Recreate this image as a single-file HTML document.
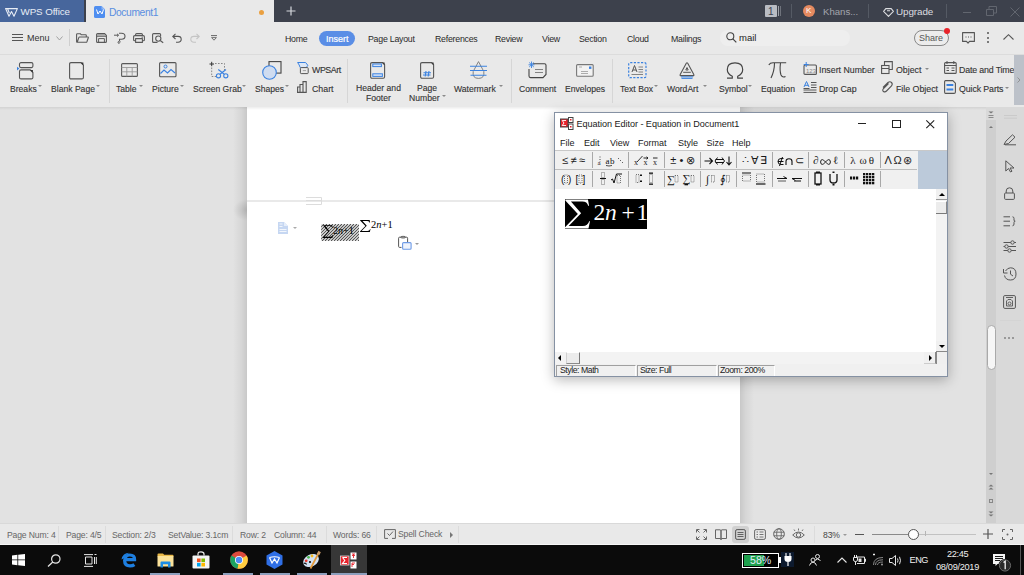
<!DOCTYPE html>
<html><head><meta charset="utf-8">
<style>
*{margin:0;padding:0;box-sizing:border-box}
html,body{width:1024px;height:575px;overflow:hidden;background:#e1e1e1;font-family:"Liberation Sans",sans-serif}
.a{position:absolute}
.t{position:absolute;white-space:nowrap;line-height:1}
svg{position:absolute;overflow:visible}
.ribl{font-size:8.6px;color:#333;-webkit-text-stroke:0.12px #333}
.ribs{font-size:8.8px;color:#333;-webkit-text-stroke:0.12px #333}
.arr{position:absolute;width:0;height:0;border-left:2.3px solid transparent;border-right:2.3px solid transparent;border-top:2.6px solid #8a8a8a;margin-top:0px}
.em{font-size:9px;color:#1a1a1a;margin-top:1px}
.es{font-size:10px;color:#1a1a1a;font-family:"Liberation Serif",serif}
.est{font-size:8.7px;color:#222;letter-spacing:-0.45px;margin-top:0.3px}
.st{font-size:8.6px;color:#666;letter-spacing:-0.15px}
.sts{top:526px;width:1px;height:17px;background:#dcdcdc}
.tab{top:34.5px;font-size:8.8px;color:#2a2a2a;letter-spacing:-0.25px}
</style></head><body>

<!-- TITLE BAR -->
<div class="a" style="left:0;top:0;width:1024px;height:22px;background:#3d414c"></div>
<div class="a" style="left:0;top:0;width:84px;height:22px;background:#47669c"></div>
<div class="a" style="left:86px;top:0;width:188px;height:22px;background:#e9e9e9"></div>
<!-- WPS logo -->
<svg style="left:5px;top:8px" width="13" height="9" viewBox="0 0 13 9"><path d="M0.6 0.6H12.4L9 8.2L6.5 3.5L4 8.2Z M2.6 0.8L4.3 5" fill="none" stroke="#e8edf5" stroke-width="1.1" stroke-linejoin="round"/></svg>
<div class="t" style="left:20.5px;top:6.5px;font-size:9.8px;color:#e8edf5;letter-spacing:-0.1px">WPS Office</div>
<!-- doc icon -->
<svg style="left:94px;top:6px" width="11" height="12" viewBox="0 0 11 12"><path d="M1.5 0H7.5L11 3.5V10.5Q11 12 9.5 12H1.5Q0 12 0 10.5V1.5Q0 0 1.5 0Z" fill="#4f8ef0"/><path d="M7.5 0V3.5H11Z" fill="#8db6f5"/></svg>
<svg style="left:96px;top:9px" width="8" height="6" viewBox="0 0 8 6"><path d="M0.5 0.5 L2 5 L4 2 L6 5 L7.5 0.5" fill="none" stroke="#fff" stroke-width="1"/></svg>
<div class="t" style="left:109px;top:7.6px;font-size:10.3px;color:#5a8ee0;letter-spacing:-0.4px">Document1</div>
<div class="a" style="left:259px;top:10px;width:5px;height:5px;border-radius:50%;background:#eaa040"></div>
<svg style="left:286px;top:6px" width="10" height="10" viewBox="0 0 10 10"><path d="M5 0.5V9.5M0.5 5H9.5" stroke="#d5d7dc" stroke-width="1.2"/></svg>

<!-- right of title bar -->
<div class="a" style="left:765px;top:5px;width:12px;height:12px;background:#b9bcc3;border-radius:1px"></div>
<div class="t" style="left:768px;top:6.5px;font-size:10px;color:#3d414c">1</div>
<div class="a" style="left:778px;top:6px;width:1px;height:10px;background:#9ea1a8"></div>
<div class="a" style="left:780px;top:6px;width:1px;height:10px;background:#6f737c"></div>
<div class="a" style="left:791px;top:4px;width:1px;height:14px;background:#555a64"></div>
<div class="a" style="left:803px;top:5px;width:12px;height:12px;border-radius:50%;background:#e58a60"></div>
<div class="t" style="left:806px;top:7px;font-size:8px;color:#fff">K</div>
<div class="t" style="left:823px;top:6.8px;font-size:9.6px;color:#a3a5ac">Khans...</div>
<div class="a" style="left:868px;top:4px;width:1px;height:14px;background:#555a64"></div>
<svg style="left:883px;top:7.5px" width="11" height="9" viewBox="0 0 11 9"><path d="M2.8 0.6H8.2L10.4 3.3L5.5 8.4L0.6 3.3Z M4 2.7H7" fill="none" stroke="#dcdde0" stroke-width="1.1" stroke-linejoin="round"/></svg>
<div class="t" style="left:896px;top:7px;font-size:9.9px;color:#dcdde0;letter-spacing:-0.1px">Upgrade</div>
<div class="a" style="left:946px;top:4px;width:1px;height:14px;background:#555a64"></div>
<div class="a" style="left:963px;top:12px;width:8px;height:1px;background:#62666f"></div>
<svg style="left:986px;top:6px" width="11" height="10" viewBox="0 0 11 10"><path d="M0.5 3.5H7.5V9.5H0.5Z M3 3.5V0.5H10.5V7H7.5" fill="none" stroke="#62666f" stroke-width="1"/></svg>
<svg style="left:1010px;top:7px" width="10" height="10" viewBox="0 0 10 10"><path d="M0.5 0.5L9.5 9.5M9.5 0.5L0.5 9.5" stroke="#62666f" stroke-width="1"/></svg>

<!-- TOOLBAR ROW -->
<div class="a" style="left:0;top:22px;width:1024px;height:85px;background:#e9e9e9"></div>
<div class="a" style="left:0;top:54px;width:1024px;height:1px;background:#dcdcdc"></div>



<!-- toolbar items -->
<svg style="left:12px;top:34px" width="11" height="8" viewBox="0 0 11 8"><path d="M0 0.5H11M0 3.5H11M0 6.5H11" stroke="#555" stroke-width="1"/></svg>
<div class="t" style="left:27px;top:34px;font-size:9px;color:#333">Menu</div>
<svg style="left:56px;top:36px" width="7" height="5" viewBox="0 0 7 5"><path d="M0.5 0.5L3.5 4L6.5 0.5" fill="none" stroke="#999" stroke-width="0.9"/></svg>
<div class="a" style="left:69px;top:29px;width:1px;height:17px;background:#cfcfcf"></div>
<!-- folder -->
<svg style="left:76px;top:33px" width="13" height="10" viewBox="0 0 13 10"><path d="M1.2 9.3Q0.6 9.3 0.6 8.6V1.4Q0.6 0.7 1.3 0.7H4.3L5.3 1.8H9.6Q10.3 1.8 10.3 2.5V4 M1.2 9.3L2.8 4.6Q3 4 3.6 4H11.8Q12.5 4 12.3 4.7L10.9 8.8Q10.7 9.3 10.1 9.3Z" fill="none" stroke="#5a5a5a" stroke-width="1.1" stroke-linejoin="round"/></svg>
<!-- save -->
<svg style="left:96px;top:33px" width="11" height="10" viewBox="0 0 11 10"><path d="M1.6 0.6H8.6L10.4 2.4V8.4Q10.4 9.4 9.4 9.4H1.6Q0.6 9.4 0.6 8.4V1.6Q0.6 0.6 1.6 0.6Z" fill="none" stroke="#5a5a5a" stroke-width="1.1"/><path d="M1 3.2H10" stroke="#5a5a5a" stroke-width="1.1"/><path d="M2.6 9.4V5.6H8.4V9.4" fill="none" stroke="#5a5a5a" stroke-width="1"/><path d="M1.2 1.8H9" stroke="#9a9a9a" stroke-width="1.2"/></svg>
<!-- format painter -->
<svg style="left:114px;top:32px" width="12" height="12" viewBox="0 0 12 12"><path d="M0 3.2H4.5M3 1.8L4.5 3.2L3 4.6" fill="none" stroke="#5a5a5a" stroke-width="1"/><path d="M5 1.2H7.5Q11 1.2 11 4.2Q11 7.2 7.5 7.2H5.5V9" fill="none" stroke="#5a5a5a" stroke-width="1.1"/><path d="M5.5 9Q3.5 9.5 4 11Q5 12 6 10.5Q6.5 9.5 5.5 9" fill="none" stroke="#5a5a5a" stroke-width="0.9"/></svg>
<!-- print -->
<svg style="left:133px;top:33px" width="12" height="10" viewBox="0 0 12 10"><path d="M2.6 2.6V1.6Q2.6 0.6 3.6 0.6H8.4Q9.4 0.6 9.4 1.6V2.6 M2.6 7.8H1.6Q0.6 7.8 0.6 6.8V3.8Q0.6 2.6 1.8 2.6H10.2Q11.4 2.6 11.4 3.8V6.8Q11.4 7.8 10.4 7.8H9.4 M2.6 5.6H9.4V9.4H2.6Z" fill="none" stroke="#5a5a5a" stroke-width="1.1" stroke-linejoin="round"/><path d="M8.5 4.2H10" stroke="#5a5a5a" stroke-width="0.9"/></svg>
<!-- preview -->
<svg style="left:152px;top:33px" width="12" height="10" viewBox="0 0 12 10"><path d="M5.5 9.4H1.6Q0.6 9.4 0.6 8.4V1.6Q0.6 0.6 1.6 0.6H7.6Q8.6 0.6 8.6 1.6V3.2" fill="none" stroke="#5a5a5a" stroke-width="1.1"/><circle cx="6.3" cy="5.6" r="2.6" fill="none" stroke="#5a5a5a" stroke-width="1.1"/><path d="M8.2 7.5L11.2 9.8" stroke="#5a5a5a" stroke-width="1.2"/></svg>
<!-- undo -->
<svg style="left:172px;top:33px" width="10" height="10" viewBox="0 0 10 10"><path d="M3.5 0.8L0.8 3.4L3.5 6 M0.9 3.4H6Q9.2 3.4 9.2 6.3Q9.2 9.2 6 9.2H4" fill="none" stroke="#555" stroke-width="1.1"/></svg>
<!-- redo -->
<svg style="left:190px;top:33px" width="10" height="10" viewBox="0 0 10 10"><path d="M6.5 0.8L9.2 3.4L6.5 6 M9.1 3.4H4Q0.8 3.4 0.8 6.3Q0.8 9.2 4 9.2H6" fill="none" stroke="#c4c4c4" stroke-width="1.1"/></svg>
<!-- dropdown -->
<svg style="left:211px;top:35px" width="6" height="6" viewBox="0 0 6 6"><path d="M0 0.6H6" stroke="#666" stroke-width="1"/><path d="M0.6 2.6H5.4L3 5.2Z" fill="none" stroke="#666" stroke-width="0.9" stroke-linejoin="round"/></svg>

<!-- tabs -->
<div class="t tab" style="left:285px">Home</div>
<div class="a" style="left:319px;top:30.5px;width:36px;height:15px;border-radius:8px;background:#5a8ee6"></div>
<div class="t" style="left:326px;top:34.5px;font-size:9px;color:#fff;-webkit-text-stroke:0.2px #fff">Insert</div>
<div class="t tab" style="left:368px">Page Layout</div>
<div class="t tab" style="left:435px">References</div>
<div class="t tab" style="left:495px">Review</div>
<div class="t tab" style="left:542px">View</div>
<div class="t tab" style="left:579px">Section</div>
<div class="t tab" style="left:627px">Cloud</div>
<div class="t tab" style="left:671px">Mailings</div>
<!-- search -->
<div class="a" style="left:720px;top:30px;width:130px;height:16px;border-radius:8px;background:#eeeeee"></div>
<svg style="left:726px;top:32px" width="11" height="11" viewBox="0 0 11 11"><circle cx="4.3" cy="4.3" r="3.5" fill="none" stroke="#444" stroke-width="1.1"/><path d="M6.8 6.8L10.3 10.3" stroke="#444" stroke-width="1.2"/></svg>
<div class="t" style="left:739px;top:33px;font-size:9.5px;color:#222">mail</div>
<!-- share -->
<div class="a" style="left:914px;top:30px;width:35px;height:16px;border-radius:8px;border:1px solid #888;background:#ececec"></div>
<div class="t" style="left:919px;top:34px;font-size:9px;color:#555">Share</div>
<div class="a" style="left:944px;top:28px;width:6px;height:6px;border-radius:50%;background:#e8232b"></div>
<svg style="left:962px;top:32px" width="13" height="13" viewBox="0 0 13 13"><path d="M0.6 0.6H12.4V9.4H7.5L6 11.2L4.5 9.4H0.6Z" fill="none" stroke="#555" stroke-width="1.1" stroke-linejoin="round"/><path d="M3.5 5H4.5M6 5H7M8.5 5H9.5" stroke="#555" stroke-width="1"/></svg>
<div class="a" style="left:987px;top:32px;width:2px;height:2px;background:#555;border-radius:1px"></div>
<div class="a" style="left:987px;top:36.5px;width:2px;height:2px;background:#555;border-radius:1px"></div>
<div class="a" style="left:987px;top:41px;width:2px;height:2px;background:#555;border-radius:1px"></div>
<svg style="left:1003px;top:34px" width="11" height="6" viewBox="0 0 11 6"><path d="M0.5 5.5L5.5 0.7L10.5 5.5" fill="none" stroke="#555" stroke-width="1.1"/></svg>


<!-- RIBBON -->
<div class="a" style="left:109px;top:59px;width:1px;height:44px;background:#d6d6d6"></div>
<div class="a" style="left:347px;top:59px;width:1px;height:44px;background:#d6d6d6"></div>
<div class="a" style="left:511px;top:59px;width:1px;height:44px;background:#d6d6d6"></div>
<div class="a" style="left:612px;top:59px;width:1px;height:44px;background:#d6d6d6"></div>


<!-- Breaks -->
<svg style="left:17px;top:62px" width="17" height="18" viewBox="0 0 17 18"><rect x="2.5" y="0.6" width="13.4" height="5" rx="1.5" fill="none" stroke="#555" stroke-width="1.1"/><path d="M4 7.9H13.2L15.9 10.6V15.4Q15.9 16.9 14.4 16.9H4Q2.5 16.9 2.5 15.4V9.4Q2.5 7.9 4 7.9Z" fill="none" stroke="#555" stroke-width="1.1"/><path d="M13 7.9L15.9 7.9L15.9 10.8Z" fill="#333"/><path d="M0 4.8L2.3 6.6L0 8.4Z" fill="#3b82e0"/></svg>
<div class="t ribl" style="left:10px;top:85px">Breaks</div><div class="arr" style="left:38px;top:85px"></div>
<!-- Blank page -->
<svg style="left:69px;top:62px" width="15" height="18" viewBox="0 0 15 18"><path d="M2 0.6H11.8L14.4 3.2V15.4Q14.4 16.9 12.9 16.9H2Q0.6 16.9 0.6 15.4V2Q0.6 0.6 2 0.6Z" fill="none" stroke="#555" stroke-width="1.1"/><path d="M11.6 0.6H14.4V3.4Z" fill="#333"/></svg>
<div class="t ribl" style="left:51px;top:85px">Blank Page</div><div class="arr" style="left:96px;top:85px"></div>
<!-- Table -->
<svg style="left:121px;top:63px" width="17" height="14" viewBox="0 0 17 14"><rect x="0.6" y="0.6" width="15.8" height="12.8" rx="1" fill="none" stroke="#5a5a5a" stroke-width="1.1"/><path d="M0.6 4.5H16.4M0.6 8.8H16.4M5.8 4.5V13.4M11.2 4.5V13.4" stroke="#9a9a9a" stroke-width="0.9"/></svg>
<div class="t ribl" style="left:116px;top:85px">Table</div><div class="arr" style="left:139px;top:85px"></div>
<!-- Picture -->
<svg style="left:159px;top:62px" width="18" height="16" viewBox="0 0 18 16"><rect x="0.6" y="0.6" width="16.4" height="14.2" rx="1" fill="none" stroke="#555" stroke-width="1.1"/><circle cx="6.5" cy="4.5" r="1.5" fill="none" stroke="#3b82e0" stroke-width="1"/><path d="M1.5 11.5L5 8L8.5 11L12 7.5L16 11" fill="none" stroke="#3b82e0" stroke-width="1.1"/></svg>
<div class="t ribl" style="left:152px;top:85px">Picture</div><div class="arr" style="left:180px;top:85px"></div>
<!-- Screen Grab -->
<svg style="left:209px;top:61px" width="20" height="18" viewBox="0 0 20 18"><path d="M0.5 3H5M2.7 0.8V5.2" stroke="#333" stroke-width="1"/><path d="M6 2.5H15.5V9 M2.7 6.5V15.5H7" fill="none" stroke="#888" stroke-width="1" stroke-dasharray="1.6 1.4"/><circle cx="9.5" cy="14.8" r="2.1" fill="none" stroke="#3b82e0" stroke-width="1.1"/><circle cx="16.8" cy="14.8" r="2.1" fill="none" stroke="#3b82e0" stroke-width="1.1"/><path d="M11 13.3L17 8.5M15.3 13.3L9.3 8.5" stroke="#3b82e0" stroke-width="1.1"/></svg>
<div class="t ribl" style="left:193px;top:85px">Screen Grab</div><div class="arr" style="left:242px;top:85px"></div>
<!-- Shapes -->
<svg style="left:262px;top:61px" width="20" height="19" viewBox="0 0 20 19"><rect x="7" y="0.6" width="12" height="11.5" fill="none" stroke="#444" stroke-width="1.1"/><circle cx="7.5" cy="11.5" r="6.8" fill="#cfdcf0" stroke="#3b82e0" stroke-width="1.1"/></svg>
<div class="t ribl" style="left:255px;top:85px">Shapes</div><div class="arr" style="left:285px;top:85px"></div>
<!-- WPSArt -->
<svg style="left:297px;top:62px" width="12" height="12" viewBox="0 0 12 12"><path d="M0.6 0.5H8.6L10.8 3.3L9.3 5.6H3.2L2.2 3Z" fill="#dce7f6" stroke="#3b82e0" stroke-width="1" stroke-linejoin="round"/><rect x="3.4" y="5.6" width="7.8" height="6" rx="0.8" fill="#e9e9e9" stroke="#555" stroke-width="1"/><path d="M5.8 8.6H9" stroke="#999" stroke-width="0.9"/></svg>
<div class="t ribs" style="left:312px;top:65.5px;letter-spacing:-0.4px">WPSArt</div>
<!-- Chart -->
<svg style="left:297px;top:81px" width="10" height="12" viewBox="0 0 10 12"><path d="M0.6 11.4V6H3V11.4M3 11.4V3.5H6V11.4M6 11.4V0.6H9.2V11.4H0" fill="none" stroke="#555" stroke-width="1.1"/></svg>
<div class="t ribs" style="left:312px;top:85px">Chart</div>
<!-- Header and Footer -->
<svg style="left:370px;top:62px" width="16" height="17" viewBox="0 0 16 17"><path d="M2 0.6H12.4L14.6 2.8V14.8Q14.6 16.2 13.2 16.2H2Q0.6 16.2 0.6 14.8V2Q0.6 0.6 2 0.6Z" fill="none" stroke="#555" stroke-width="1.1"/><path d="M12.2 0.6H14.6V3Z" fill="#333"/><rect x="2.8" y="2" width="8.6" height="2.6" fill="#d4e2f7" stroke="#3b82e0" stroke-width="1"/><rect x="2.8" y="11.8" width="9.6" height="2.6" fill="#d4e2f7" stroke="#3b82e0" stroke-width="1"/></svg>
<div class="t ribl" style="left:356px;top:84px">Header and</div>
<div class="t ribl" style="left:366px;top:94px">Footer</div>
<!-- Page Number -->
<svg style="left:420px;top:62px" width="15" height="17" viewBox="0 0 15 17"><path d="M2 0.6H11.4L13.6 2.8V14.8Q13.6 16.2 12.2 16.2H2Q0.6 16.2 0.6 14.8V2Q0.6 0.6 2 0.6Z" fill="none" stroke="#555" stroke-width="1.1"/><path d="M11.2 0.6H13.6V3Z" fill="#333"/><path d="M6 9L5.2 14.5M9 9L8.2 14.5M3.5 10.8H11M3 13H10.5" stroke="#3b82e0" stroke-width="1.1"/></svg>
<div class="t ribl" style="left:417px;top:84px">Page</div>
<div class="t ribl" style="left:409px;top:94px">Number</div><div class="arr" style="left:442px;top:95px"></div>
<!-- Watermark -->
<svg style="left:469px;top:61px" width="19" height="18" viewBox="0 0 19 18"><path d="M9.5 0.6L4.2 10.5Q3.2 17.4 9.5 17.4Q15.8 17.4 14.8 10.5Z" fill="none" stroke="#777" stroke-width="0.9"/><path d="M1 5.3H18M1 9.5H18M1.5 14.2H17.5" stroke="#3b82e0" stroke-width="1.1"/></svg>
<div class="t ribl" style="left:454px;top:85px">Watermark</div><div class="arr" style="left:499px;top:85px"></div>
<!-- Comment -->
<svg style="left:528px;top:61px" width="19" height="18" viewBox="0 0 19 18"><path d="M5 2.8H16.5Q18 2.8 18 4.3V13.5L15 16.6H2.5Q1 16.6 1 15.1V8" fill="none" stroke="#444" stroke-width="1.1"/><path d="M7 8.5H15M7 11.5H15" stroke="#777" stroke-width="0.9"/><path d="M3.5 0.5V7M0.5 3.8H6.5M1.2 1.5L5.8 6M5.8 1.5L1.2 6" stroke="#3b82e0" stroke-width="0.9"/></svg>
<div class="t ribl" style="left:519px;top:85px">Comment</div>
<!-- Envelopes -->
<svg style="left:576px;top:64px" width="18" height="13" viewBox="0 0 18 13"><rect x="0.6" y="0.6" width="16.6" height="11.6" rx="1" fill="#f2f2f2" stroke="#777" stroke-width="1.1"/><rect x="13" y="2.5" width="2.4" height="2.4" fill="#3b82e0"/><path d="M3 3H6M5 7.5H12M5 9.5H12" stroke="#999" stroke-width="0.8"/></svg>
<div class="t ribl" style="left:565px;top:85px">Envelopes</div>
<!-- Text Box -->
<svg style="left:628px;top:62px" width="19" height="17" viewBox="0 0 19 17"><rect x="0.7" y="0.7" width="17.3" height="15" rx="1.5" fill="none" stroke="#3b82e0" stroke-width="1.2" stroke-dasharray="2.2 1.4"/><path d="M4 10L6.5 3.5L9 10M5 8H8" fill="none" stroke="#555" stroke-width="1"/><path d="M10.5 5H15M10.5 7.5H15M10.5 10H15M3.5 12.5H15" stroke="#777" stroke-width="0.9"/></svg>
<div class="t ribl" style="left:620px;top:85px">Text Box</div><div class="arr" style="left:654px;top:85px"></div>
<!-- WordArt -->
<svg style="left:679px;top:62px" width="16" height="17" viewBox="0 0 16 17"><path d="M1.2 12.6L7.3 1.2Q8 0.2 8.7 1.2L14.8 12.6Q15.2 13.6 14.2 13.6H1.8Q0.8 13.6 1.2 12.6Z" fill="none" stroke="#555" stroke-width="1.1" stroke-linejoin="round"/><path d="M8 5.5L6.8 8H9.2Z M4.2 10.3H11.8" fill="none" stroke="#555" stroke-width="1"/><path d="M2 14.9H14M2.5 16.4H13.5" stroke="#3b82e0" stroke-width="1"/></svg>
<div class="t ribl" style="left:667px;top:85px">WordArt</div><div class="arr" style="left:703px;top:85px"></div>
<!-- Symbol -->
<svg style="left:726px;top:62px" width="18" height="17" viewBox="0 0 18 17"><path d="M1 16.2H6.3V14.3Q1.3 12 1.3 7.5Q1.3 0.8 9 0.8Q16.7 0.8 16.7 7.5Q16.7 12 11.7 14.3V16.2H17" fill="none" stroke="#444" stroke-width="1.2" stroke-linejoin="round"/></svg>
<div class="t ribl" style="left:719px;top:85px">Symbol</div><div class="arr" style="left:748px;top:85px"></div>
<!-- Equation -->
<svg style="left:768px;top:62px" width="19" height="17" viewBox="0 0 19 17"><path d="M0.8 3Q2 0.8 5 0.8H18.2M6.5 0.8Q6.5 9 3 16 M12.5 0.8Q11.5 9 13 13Q14.5 16 17.5 14.5" fill="none" stroke="#444" stroke-width="1.1"/></svg>
<div class="t ribl" style="left:761px;top:85px">Equation</div>
<!-- Insert Number -->
<svg style="left:803px;top:62px" width="14" height="13" viewBox="0 0 14 13"><rect x="1" y="3" width="12.4" height="9.4" rx="1" fill="none" stroke="#555" stroke-width="1.1"/><path d="M3.2 0V5M0.7 2.5H5.7" stroke="#3b82e0" stroke-width="1"/><text x="3" y="10.8" font-size="6" font-family="Liberation Sans" fill="#888">123</text></svg>
<div class="t ribs" style="left:819px;top:65.5px">Insert Number</div>
<!-- Drop Cap -->
<svg style="left:803px;top:81px" width="14" height="12" viewBox="0 0 14 12"><path d="M1 6L3.5 0.5L6 6M1.8 4.3H5.2" fill="none" stroke="#3b82e0" stroke-width="1"/><path d="M0.5 7.5H6.5M8 1.5H13.5M8 4H13.5M8 6.5H13.5M0.5 9H13.5M0.5 11.4H13.5" stroke="#555" stroke-width="1"/></svg>
<div class="t ribs" style="left:819px;top:85px">Drop Cap</div>
<!-- Object -->
<svg style="left:881px;top:61px" width="12" height="13" viewBox="0 0 12 13"><path d="M3.5 4V0.6H11.3V8.5H8" fill="none" stroke="#555" stroke-width="1.1"/><rect x="0.6" y="4.5" width="7.4" height="8" fill="none" stroke="#555" stroke-width="1.1"/><path d="M0.6 7.5H8" stroke="#555" stroke-width="1"/></svg>
<div class="t ribs" style="left:896px;top:65.5px">Object</div><div class="arr" style="left:925px;top:68px"></div>
<!-- File Object -->
<svg style="left:881px;top:81px" width="12" height="12" viewBox="0 0 12 12"><path d="M7.5 2.5L2.5 7.5Q1 9.5 2.5 10.5Q4 11.5 5.5 10L10.5 5Q12 3 10.5 1.5Q9 0 7 1.5L2 6.5" fill="none" stroke="#555" stroke-width="1.1"/></svg>
<div class="t ribs" style="left:896px;top:85px">File Object</div>
<!-- Date and Time -->
<svg style="left:944px;top:61px" width="13" height="13" viewBox="0 0 13 13"><rect x="0.6" y="1.6" width="11.6" height="10.8" rx="1" fill="none" stroke="#555" stroke-width="1.1"/><path d="M3 0V3M9.8 0V3M0.6 4.5H12.2M2.5 7H5M7.5 7H10.5M2.5 9.5H5M7.5 9.5H10.5" stroke="#555" stroke-width="1"/></svg>
<div class="t ribs" style="left:959px;top:65.5px;letter-spacing:-0.15px">Date and Time</div>
<!-- Quick Parts -->
<svg style="left:944px;top:80px" width="12" height="14" viewBox="0 0 12 14"><path d="M1.5 0.6H8.8L11.4 3.2V12Q11.4 13.4 10 13.4H1.5Q0.6 13.4 0.6 12V2Q0.6 0.6 1.5 0.6Z" fill="none" stroke="#555" stroke-width="1.1"/><rect x="2.5" y="4" width="6.8" height="2" fill="#3b82e0"/><rect x="2.5" y="8.5" width="6.8" height="2" fill="#3b82e0"/></svg>
<div class="t ribs" style="left:959px;top:85px;letter-spacing:-0.1px">Quick Parts</div><div class="arr" style="left:1004.5px;top:87px"></div>


<div class="a" style="left:1014px;top:55px;width:10px;height:50px;background:#bcc1c9"></div>
<svg style="left:1017px;top:77px" width="4" height="6" viewBox="0 0 4 6"><path d="M0.5 0.5L3 3L0.5 5.5" fill="none" stroke="#888" stroke-width="0.8"/></svg>
<!-- DOC AREA -->
<div class="a" style="left:0;top:107px;width:986px;height:416px;background:#e2e2e2"></div>
<!-- page shadow -->
<div class="a" style="left:233px;top:107px;width:14px;height:416px;background:linear-gradient(to right,#e2e2e2,#d6d6d6 60%,#c8c8c8)"></div>
<div class="a" style="left:740px;top:107px;width:14px;height:416px;background:linear-gradient(to right,#c8c8c8,#d6d6d6 40%,#e2e2e2)"></div>
<div class="a" style="left:230px;top:196px;width:17px;height:28px;background:radial-gradient(ellipse 14px 11px at 100% 50%,rgba(0,0,0,0.13),rgba(0,0,0,0))"></div>
<div class="a" style="left:247px;top:107px;width:493px;height:416px;background:#fff"></div>
<div class="a" style="left:0;top:107px;width:986px;height:3px;background:linear-gradient(to bottom,rgba(0,0,0,0.07),rgba(0,0,0,0))"></div>
<div class="a" style="left:247px;top:200px;width:307px;height:2px;background:#e9e9e9"></div>
<svg style="left:306px;top:197px" width="17" height="9" viewBox="0 0 17 9"><path d="M0 0.5H15.5V7.5H0 M0 3.5H15.5" fill="none" stroke="#dcdcdc" stroke-width="1"/></svg>
<!-- doc icon -->
<svg style="left:278px;top:222px" width="10" height="12" viewBox="0 0 10 12"><path d="M0 0H6L10 4V12H0Z" fill="#c6d7f2"/><path d="M6 0V4H10" fill="#e6eefa"/><path d="M1.5 2H4.5M1.5 4.5H4.5M1.5 7.5H8.5M1.5 9.5H8.5" stroke="#f2f6fc" stroke-width="1"/></svg>
<div class="a" style="left:293px;top:227px;width:0;height:0;border-left:2px solid transparent;border-right:2px solid transparent;border-top:2px solid #aaa"></div>
<!-- hatched selection -->
<svg style="left:321px;top:224px;overflow:hidden" width="38" height="17" viewBox="0 0 38 17"><rect width="38" height="17" fill="#fff"/><g stroke="#505050" stroke-width="1.1"><path d="M-17 17L0 0" /><path d="M-14 17L3 0" /><path d="M-11 17L6 0" /><path d="M-8 17L9 0" /><path d="M-5 17L12 0" /><path d="M-2 17L15 0" /><path d="M1 17L18 0" /><path d="M4 17L21 0" /><path d="M7 17L24 0" /><path d="M10 17L27 0" /><path d="M13 17L30 0" /><path d="M16 17L33 0" /><path d="M19 17L36 0" /><path d="M22 17L39 0" /><path d="M25 17L42 0" /><path d="M28 17L45 0" /><path d="M31 17L48 0" /><path d="M34 17L51 0" /><path d="M37 17L54 0" /></g></svg>
<svg style="left:323px;top:224.5px" width="10" height="13" viewBox="0 0 24.5 29" preserveAspectRatio="none"><path d="M0.3 0.3H22.5L23.6 6.5H22.7Q21.8 2.3 17 2.3H5.8L15.8 13.8L3.6 26.3H17.5Q22.3 26.3 23.7 21.6H24.5L23 28.8H0V27.6L12.6 14.6L0.3 1.3Z" fill="#000"/></svg>
<div class="t" style="left:333px;top:226px;font-size:10px;font-family:'Liberation Serif',serif;color:#000">2<i>n</i>+1</div>
<svg style="left:360px;top:220px" width="10.5" height="12" viewBox="0 0 24.5 29" preserveAspectRatio="none"><path d="M0.3 0.3H22.5L23.6 6.5H22.7Q21.8 2.3 17 2.3H5.8L15.8 13.8L3.6 26.3H17.5Q22.3 26.3 23.7 21.6H24.5L23 28.8H0V27.6L12.6 14.6L0.3 1.3Z" fill="#000"/></svg>
<div class="t" style="left:371px;top:220px;font-size:10.5px;font-family:'Liberation Serif',serif;color:#000">2<i>n</i>+1</div>
<!-- paste icon -->
<svg style="left:398px;top:236px" width="14" height="14" viewBox="0 0 14 14"><path d="M3.5 11.4H1.6Q0.6 11.4 0.6 10.4V2.2Q0.6 1.2 1.6 1.2H8.6Q9.6 1.2 9.6 2.2V6" fill="none" stroke="#555" stroke-width="1"/><ellipse cx="5.1" cy="1.2" rx="2.5" ry="0.9" fill="#aaa" stroke="#555" stroke-width="0.8"/><rect x="4.6" y="6.6" width="8.5" height="6.6" rx="1" fill="#eef3fc" stroke="#6e9be6" stroke-width="1.1"/></svg>
<div class="a" style="left:415px;top:243px;width:0;height:0;border-left:2px solid transparent;border-right:2px solid transparent;border-top:2px solid #999"></div>


<!-- EQUATION EDITOR -->
<div class="a" style="left:554px;top:112px;width:394px;height:265px;box-shadow:0 3px 12px rgba(0,0,0,0.28);background:#fff;border:1px solid #8591a3"></div>
<!-- icon -->
<svg style="left:560px;top:117px" width="14" height="13" viewBox="0 0 14 13"><rect x="0.5" y="2" width="7.5" height="8" fill="#e8232b" stroke="#444" stroke-width="1"/><path d="M2.2 3.5H6M2.2 3.5L4 6L2.2 8.5H6" fill="none" stroke="#fff" stroke-width="0.9"/><rect x="8.5" y="0.5" width="4.5" height="5" fill="#fff" stroke="#444" stroke-width="1"/><rect x="8.5" y="7" width="4.5" height="5.5" fill="#fff" stroke="#444" stroke-width="1"/><rect x="10" y="2" width="1.5" height="1.5" fill="#e8232b"/><rect x="10" y="9" width="1.5" height="1.5" fill="#e8232b"/></svg>
<div class="t" style="left:576.5px;top:119.5px;font-size:9.1px;color:#1a1a1a;letter-spacing:-0.05px">Equation Editor - Equation in Document1</div>
<div class="a" style="left:858px;top:123px;width:8px;height:1px;background:#222"></div>
<div class="a" style="left:892px;top:119.5px;width:8.5px;height:8px;border:1px solid #222"></div>
<svg style="left:926px;top:119.5px" width="9" height="9" viewBox="0 0 9 9"><path d="M0.3 0.3L8.2 8.2M8.2 0.3L0.3 8.2" stroke="#222" stroke-width="1.1"/></svg>
<!-- menu -->
<div class="t em" style="left:560px;top:138px">File</div>
<div class="t em" style="left:584px;top:138px">Edit</div>
<div class="t em" style="left:610px;top:138px">View</div>
<div class="t em" style="left:638px;top:138px">Format</div>
<div class="t em" style="left:678px;top:138px">Style</div>
<div class="t em" style="left:706.5px;top:138px">Size</div>
<div class="t em" style="left:732px;top:138px">Help</div>
<!-- toolbar -->
<div class="a" style="left:555px;top:150px;width:392px;height:39px;background:#f0f0f0;border-top:1px solid #c8c8c8"></div>
<div class="a" style="left:918px;top:151px;width:29px;height:38px;background:#bccada"></div>
<div class="a" style="left:555px;top:169px;width:362px;height:1px;background:#bdbdbd"></div>
<div class="a" style="left:592px;top:152px;width:1px;height:16px;background:#a8a8a8"></div><div class="a" style="left:592px;top:171px;width:1px;height:16px;background:#a8a8a8"></div>
<div class="a" style="left:628px;top:152px;width:1px;height:16px;background:#a8a8a8"></div><div class="a" style="left:628px;top:171px;width:1px;height:16px;background:#a8a8a8"></div>
<div class="a" style="left:664px;top:152px;width:1px;height:16px;background:#a8a8a8"></div><div class="a" style="left:664px;top:171px;width:1px;height:16px;background:#a8a8a8"></div>
<div class="a" style="left:700px;top:152px;width:1px;height:16px;background:#a8a8a8"></div><div class="a" style="left:700px;top:171px;width:1px;height:16px;background:#a8a8a8"></div>
<div class="a" style="left:736px;top:152px;width:1px;height:16px;background:#a8a8a8"></div><div class="a" style="left:736px;top:171px;width:1px;height:16px;background:#a8a8a8"></div>
<div class="a" style="left:772px;top:152px;width:1px;height:16px;background:#a8a8a8"></div><div class="a" style="left:772px;top:171px;width:1px;height:16px;background:#a8a8a8"></div>
<div class="a" style="left:808px;top:152px;width:1px;height:16px;background:#a8a8a8"></div><div class="a" style="left:808px;top:171px;width:1px;height:16px;background:#a8a8a8"></div>
<div class="a" style="left:844px;top:152px;width:1px;height:16px;background:#a8a8a8"></div><div class="a" style="left:844px;top:171px;width:1px;height:16px;background:#a8a8a8"></div>
<div class="a" style="left:880px;top:152px;width:1px;height:16px;background:#a8a8a8"></div><div class="a" style="left:880px;top:171px;width:1px;height:16px;background:#a8a8a8"></div>

<div class="t" style="left:557px;top:154.5px;width:16px;text-align:center;font-size:11px;font-family:'Liberation Sans',sans-serif;color:#1a1a1a;">&#8804;</div>
<div class="t" style="left:565.5px;top:154.5px;width:16px;text-align:center;font-size:11px;font-family:'Liberation Sans',sans-serif;color:#1a1a1a;">&#8800;</div>
<div class="t" style="left:574px;top:154.5px;width:16px;text-align:center;font-size:11px;font-family:'Liberation Sans',sans-serif;color:#1a1a1a;">&#8776;</div>
<svg style="left:597px;top:156px" width="30" height="10" viewBox="0 0 30 10"><path d="M3 0.5V1.5M3 3V4M3 5.5V6" stroke="#222" stroke-width="0.8"/><text x="0.5" y="9" font-size="7" font-family="Liberation Serif" fill="#111">a</text><text x="8.5" y="8" font-size="9" font-family="Liberation Serif" fill="#111">a</text><text x="13" y="8" font-size="9" font-family="Liberation Serif" fill="#111">b</text><path d="M9 9.5Q12 10.5 15 9.5" stroke="#222" stroke-width="0.8" fill="none"/><circle cx="21.5" cy="2.5" r="0.5" fill="#333"/><circle cx="23.5" cy="4.5" r="0.5" fill="#333"/><circle cx="25.5" cy="6.5" r="0.5" fill="#333"/></svg>
<svg style="left:634px;top:155px" width="26" height="11" viewBox="0 0 26 11"><text x="0" y="10" font-size="8" font-family="Liberation Serif" fill="#222">x</text><path d="M3 7L8.5 1" stroke="#222" stroke-width="0.9"/><text x="9.5" y="10" font-size="8" font-family="Liberation Serif" fill="#222">x</text><path d="M9.5 3H14M12.5 1.8L14 3L12.5 4.2" stroke="#111" stroke-width="0.9" fill="none"/><text x="19" y="10" font-size="8" font-family="Liberation Serif" fill="#222">x</text><path d="M19 3H23.5" stroke="#111" stroke-width="0.9"/></svg>
<div class="t" style="left:665.3px;top:154.5px;width:16px;text-align:center;font-size:11px;font-family:'Liberation Sans',sans-serif;color:#1a1a1a;">&#177;</div>
<div class="t" style="left:673.5px;top:154.5px;width:16px;text-align:center;font-size:11px;font-family:'Liberation Sans',sans-serif;color:#1a1a1a;">&#8226;</div>
<div class="t" style="left:682px;top:154.5px;width:16px;text-align:center;font-size:11px;font-family:'Liberation Sans',sans-serif;color:#1a1a1a;">&#8855;</div>



<div class="t" style="left:737.8px;top:154.5px;width:16px;text-align:center;font-size:11px;font-family:'Liberation Sans',sans-serif;color:#1a1a1a;">&#8756;</div>
<div class="t" style="left:747.2px;top:154.5px;width:16px;text-align:center;font-size:11px;font-family:'Liberation Sans',sans-serif;color:#1a1a1a;">&#8704;</div>
<div class="t" style="left:755.7px;top:154.5px;width:16px;text-align:center;font-size:11px;font-family:'Liberation Sans',sans-serif;color:#1a1a1a;">&#8707;</div>
<svg style="left:777px;top:157px" width="8" height="9" viewBox="0 0 8 9"><path d="M6.5 1.5H4Q1 1.5 1 4.5Q1 7.5 4 7.5H6.5M1 4.5H6.5M5.5 0L2.5 9" fill="none" stroke="#111" stroke-width="1"/></svg>

<div class="t" style="left:791px;top:154.5px;width:16px;text-align:center;font-size:11px;font-family:'Liberation Sans',sans-serif;color:#1a1a1a;">&#8834;</div>
<div class="t" style="left:808px;top:154.5px;width:16px;text-align:center;font-size:11px;font-family:'Liberation Serif',serif;color:#1a1a1a;">&#8706;</div>
<svg style="left:820px;top:159px" width="11" height="6" viewBox="0 0 11 6"><path d="M5.5 3Q3.5 0.6 2.3 0.6Q0.6 0.6 0.6 3Q0.6 5.4 2.3 5.4Q3.5 5.4 5.5 3Q7.5 0.6 8.7 0.6Q10.4 0.6 10.4 3Q10.4 5.4 8.7 5.4Q7.5 5.4 5.5 3Z" fill="none" stroke="#222" stroke-width="1"/></svg>
<div class="t" style="left:827.3px;top:154.5px;width:16px;text-align:center;font-size:11px;font-family:'Liberation Serif',serif;color:#1a1a1a;">&#8467;</div>
<div class="t" style="left:845px;top:154.5px;width:16px;text-align:center;font-size:11px;font-family:'Liberation Serif',serif;color:#1a1a1a;">&#955;</div>
<div class="t" style="left:855px;top:154.5px;width:16px;text-align:center;font-size:11px;font-family:'Liberation Serif',serif;color:#1a1a1a;">&#969;</div>
<div class="t" style="left:863.4px;top:154.5px;width:16px;text-align:center;font-size:11px;font-family:'Liberation Serif',serif;color:#1a1a1a;">&#952;</div>
<div class="t" style="left:880.2px;top:154.5px;width:16px;text-align:center;font-size:11px;font-family:'Liberation Sans',sans-serif;color:#1a1a1a;">&#923;</div>
<div class="t" style="left:889.7px;top:154.5px;width:16px;text-align:center;font-size:11px;font-family:'Liberation Sans',sans-serif;color:#1a1a1a;">&#937;</div>
<div class="t" style="left:899.8px;top:154.5px;width:16px;text-align:center;font-size:11px;font-family:'Liberation Sans',sans-serif;color:#1a1a1a;">&#8859;</div>
<svg style="left:556px;top:171px" width="362" height="16" viewBox="0 0 362 16"><text x="5" y="12" font-size="10" font-family="Liberation Sans" fill="#111">(</text><rect x="8.5" y="4" width="3" height="8" fill="none" stroke="#555" stroke-width="0.8" stroke-dasharray="1 1"/><text x="12" y="12" font-size="10" font-family="Liberation Sans" fill="#111">)</text><text x="19.5" y="12" font-size="10" font-family="Liberation Sans" fill="#111">[</text><rect x="23" y="4" width="3" height="8" fill="none" stroke="#555" stroke-width="0.8" stroke-dasharray="1 1"/><text x="26.5" y="12" font-size="10" font-family="Liberation Sans" fill="#111">]</text><rect x="45.5" y="1.5" width="3" height="5" fill="none" stroke="#555" stroke-width="0.8" stroke-dasharray="1 1"/><path d="M44 7.5H50" stroke="#111" stroke-width="1"/><rect x="45.5" y="8.5" width="3" height="5" fill="none" stroke="#555" stroke-width="0.8" stroke-dasharray="1 1"/><path d="M55 9L56.5 8L58 12L60.5 3H66" fill="none" stroke="#111" stroke-width="1"/><rect x="61" y="4.5" width="3.5" height="7.5" fill="none" stroke="#555" stroke-width="0.8" stroke-dasharray="1 1"/><rect x="80" y="3.5" width="3" height="8" fill="none" stroke="#555" stroke-width="0.8" stroke-dasharray="1 1"/><rect x="84" y="3.5" width="2" height="1.5" fill="#111"/><rect x="84" y="9.5" width="2" height="1.5" fill="#111"/><rect x="93" y="1.5" width="4" height="1.3" fill="#111"/><rect x="93.5" y="3.5" width="3" height="8" fill="none" stroke="#555" stroke-width="0.8" stroke-dasharray="1 1"/><rect x="93" y="12.5" width="4" height="1.3" fill="#111"/><text x="111" y="12" font-size="11" font-family="Liberation Serif" fill="#111">&#8721;</text><rect x="119" y="4.5" width="3" height="6.5" fill="none" stroke="#555" stroke-width="0.8" stroke-dasharray="1 1"/><text x="126.5" y="11" font-size="11" font-family="Liberation Serif" fill="#111">&#8721;</text><rect x="135" y="4.5" width="3" height="6.5" fill="none" stroke="#555" stroke-width="0.8" stroke-dasharray="1 1"/><rect x="128.5" y="13" width="3.5" height="1.3" fill="#111"/><text x="150" y="12" font-size="11" font-family="Liberation Serif" fill="#111">&#8747;</text><rect x="155.5" y="4.5" width="3" height="6.5" fill="none" stroke="#555" stroke-width="0.8" stroke-dasharray="1 1"/><text x="164" y="12" font-size="11" font-family="Liberation Serif" fill="#111">&#8750;</text><rect x="170.5" y="4.5" width="3" height="6.5" fill="none" stroke="#555" stroke-width="0.8" stroke-dasharray="1 1"/><path d="M186 2H195" stroke="#111" stroke-width="1"/><rect x="186.5" y="4" width="8" height="6" fill="none" stroke="#555" stroke-width="0.8" stroke-dasharray="1 1"/><rect x="200.5" y="3" width="8" height="8" fill="none" stroke="#555" stroke-width="0.8" stroke-dasharray="1 1"/><path d="M200 13H209.5" stroke="#111" stroke-width="1.2"/><path d="M221 7.5H231M227.5 5.5L231 7.5" fill="none" stroke="#111" stroke-width="1"/><path d="M222 10H230" stroke="#333" stroke-width="0.8"/><path d="M236 7.5H246M239.5 9.5L236 7.5" fill="none" stroke="#111" stroke-width="1"/><path d="M238 10H245" stroke="#333" stroke-width="1.2"/><rect x="259" y="2" width="6" height="11" fill="none" stroke="#111" stroke-width="1.3"/><rect x="260" y="0.5" width="4" height="1.5" fill="#111"/><rect x="260" y="13" width="4" height="1.5" fill="#111"/><path d="M274 3V9Q274 12 277.5 12Q281 12 281 9V3" fill="none" stroke="#111" stroke-width="1.3"/><rect x="276.5" y="0.5" width="2" height="1.5" fill="#111"/><rect x="276.5" y="13" width="2" height="1.5" fill="#111"/><rect x="294" y="5.5" width="2.2" height="3" fill="#111"/><rect x="297" y="5.5" width="2.2" height="3" fill="#111"/><rect x="300" y="5.5" width="2.2" height="3" fill="#111"/><rect x="307" y="2" width="2.3" height="2.3" fill="#111"/><rect x="310" y="2" width="2.3" height="2.3" fill="#111"/><rect x="313" y="2" width="2.3" height="2.3" fill="#111"/><rect x="316" y="2" width="2.3" height="2.3" fill="#111"/><rect x="307" y="5" width="2.3" height="2.3" fill="#111"/><rect x="310" y="5" width="2.3" height="2.3" fill="#111"/><rect x="313" y="5" width="2.3" height="2.3" fill="#111"/><rect x="316" y="5" width="2.3" height="2.3" fill="#111"/><rect x="307" y="8" width="2.3" height="2.3" fill="#111"/><rect x="310" y="8" width="2.3" height="2.3" fill="#111"/><rect x="313" y="8" width="2.3" height="2.3" fill="#111"/><rect x="316" y="8" width="2.3" height="2.3" fill="#111"/><rect x="307" y="11" width="2.3" height="2.3" fill="#111"/><rect x="310" y="11" width="2.3" height="2.3" fill="#111"/><rect x="313" y="11" width="2.3" height="2.3" fill="#111"/><rect x="316" y="11" width="2.3" height="2.3" fill="#111"/></svg>
<svg style="left:703px;top:156px" width="30" height="10" viewBox="0 0 30 10"><path d="M1.5 5H9.5M6.5 2L9.5 5L6.5 8" fill="none" stroke="#111" stroke-width="1.1"/><path d="M12.5 3.5H21M12.5 6.5H21 M14.5 1.5L12 5L14.5 8.5M19 1.5L21.5 5L19 8.5" fill="none" stroke="#111" stroke-width="1"/><path d="M26 0.5V8.5M23.5 6L26 8.8L28.5 6" fill="none" stroke="#111" stroke-width="1.1"/></svg><svg style="left:785px;top:158px" width="8" height="7" viewBox="0 0 8 7"><path d="M1 7V3.5Q1 0.8 4 0.8Q7 0.8 7 3.5V7" fill="none" stroke="#111" stroke-width="1.1"/></svg>
<!-- client area -->
<div class="a" style="left:565px;top:199px;width:82px;height:30px;background:#000"></div>
<svg style="left:565px;top:199px" width="25" height="30" viewBox="0 0 24.5 29"><path d="M0.3 0.3H22.5L23.6 6.5H22.7Q21.8 2.3 17 2.3H5.8L15.8 13.8L3.6 26.3H17.5Q22.3 26.3 23.7 21.6H24.5L23 28.8H0V27.6L12.6 14.6L0.3 1.3Z" fill="#fff"/></svg>
<div class="t" style="left:593.5px;top:200.5px;font-size:23.5px;font-family:'Liberation Serif',serif;color:#fff;letter-spacing:-0.3px">2<i>n</i></div>
<div class="t" style="left:621.5px;top:200.5px;font-size:23.5px;font-family:'Liberation Serif',serif;color:#fff">+</div>
<div class="t" style="left:636.5px;top:200.5px;font-size:23.5px;font-family:'Liberation Serif',serif;color:#fff">1</div>
<!-- v scroll -->
<div class="a" style="left:936px;top:189px;width:11px;height:163px;background:#f3f3f3"></div>
<div class="a" style="left:936px;top:189px;width:11px;height:11px;background:#f0f0f0;border-bottom:1px solid #999"></div>
<div class="a" style="left:938.5px;top:193px;width:0;height:0;border-left:3px solid transparent;border-right:3px solid transparent;border-bottom:3px solid #000"></div>
<div class="a" style="left:936px;top:201px;width:11px;height:13px;background:#ececec;border-bottom:1px solid #7a7a7a;border-right:1px solid #8a8a8a;border-top:1px solid #fff"></div>
<div class="a" style="left:936px;top:341px;width:11px;height:10px;background:#f0f0f0"></div>
<div class="a" style="left:938.5px;top:345px;width:0;height:0;border-left:3px solid transparent;border-right:3px solid transparent;border-top:3px solid #000"></div>
<!-- h scroll -->
<div class="a" style="left:555px;top:352px;width:381px;height:12px;background:#f3f3f3"></div>
<div class="a" style="left:558px;top:355px;width:0;height:0;border-top:3px solid transparent;border-bottom:3px solid transparent;border-right:3px solid #000"></div>
<div class="a" style="left:566px;top:352px;width:14px;height:12px;background:#ececec;border-right:1px solid #7a7a7a;border-bottom:1px solid #8a8a8a;border-left:1px solid #d0d0d0;border-top:1px solid #fff"></div>
<div class="a" style="left:924px;top:352px;width:12px;height:12px;background:#f0f0f0;border-right:1px solid #888;border-bottom:1px solid #ccc"></div>
<div class="a" style="left:929px;top:355px;width:0;height:0;border-top:3px solid transparent;border-bottom:3px solid transparent;border-left:3px solid #000"></div>
<div class="a" style="left:936px;top:351px;width:11px;height:13px;background:#efefef;border-left:1px solid #888;border-top:1px solid #888"></div>
<!-- status -->
<div class="a" style="left:555px;top:364px;width:392px;height:12px;background:#f0f0f0"></div>
<div class="a" style="left:556px;top:365px;width:80px;height:11px;border-top:1px solid #a0a0a0;border-left:1px solid #a0a0a0;border-right:1px solid #fff"></div>
<div class="a" style="left:637px;top:365px;width:80px;height:11px;border-top:1px solid #a0a0a0;border-left:1px solid #a0a0a0;border-right:1px solid #fff"></div>
<div class="a" style="left:718px;top:365px;width:57px;height:11px;border-top:1px solid #a0a0a0;border-left:1px solid #a0a0a0;border-right:1px solid #fff"></div>
<div class="t est" style="left:560px;top:366px">Style: Math</div>
<div class="t est" style="left:640px;top:366px">Size: Full</div>
<div class="t est" style="left:720px;top:366px">Zoom: 200%</div>


<!-- RIGHT SIDEBAR -->
<div class="a" style="left:996px;top:107px;width:28px;height:416px;background:#d9d9d9"></div>
<div class="a" style="left:986px;top:107px;width:10px;height:416px;background:#cfcfcf"></div>
<div class="a" style="left:986px;top:107px;width:10px;height:13px;background:#d9d9d9"></div>
<svg style="left:988px;top:111px" width="6" height="7" viewBox="0 0 6 7"><path d="M0.5 0.5H5.5L3 2.5Z" fill="#777"/><path d="M0.5 4.5H5.5M0.5 6.5H5.5" stroke="#777" stroke-width="0.8"/></svg>
<div class="a" style="left:988.5px;top:126px;width:0;height:0;border-left:2.5px solid transparent;border-right:2.5px solid transparent;border-bottom:2.5px solid #777"></div>
<div class="a" style="left:986.5px;top:325px;width:9.5px;height:45px;background:#f6f6f6;border:1px solid #a9a9a9;border-radius:5px"></div>
<div class="a" style="left:988.5px;top:473px;width:0;height:0;border-left:2.5px solid transparent;border-right:2.5px solid transparent;border-top:2.5px solid #777"></div>
<svg style="left:988px;top:484px" width="6" height="6" viewBox="0 0 6 6"><path d="M0.5 2.5L3 0.5L5.5 2.5Z M0.5 5.5L3 3.5L5.5 5.5Z" fill="#777"/></svg>
<div class="a" style="left:989px;top:498.5px;width:4px;height:4px;border:1px solid #888"></div>
<svg style="left:988px;top:511px" width="6" height="6" viewBox="0 0 6 6"><path d="M0.5 0.5L3 2.5L5.5 0.5Z M0.5 3.5L3 5.5L5.5 3.5Z" fill="#777"/></svg>
<!-- sidebar icons -->
<svg style="left:1004px;top:115px" width="13" height="4" viewBox="0 0 13 4"><path d="M0 0.5H13M0 3.2H13" stroke="#c8c8c8" stroke-width="0.9"/></svg>
<svg style="left:1003px;top:134px" width="14" height="12" viewBox="0 0 14 12"><path d="M1 10.5L3 7L9.5 0.8L12 3.2L5.5 9.5Z M2 10.8H13" fill="none" stroke="#555" stroke-width="1"/></svg>
<svg style="left:1005px;top:160px" width="10" height="13" viewBox="0 0 10 13"><path d="M0.8 0.8V11L3.5 8.5L5.5 12L7 11.2L5 8H9Z" fill="none" stroke="#555" stroke-width="1" stroke-linejoin="round"/></svg>
<svg style="left:1004px;top:187px" width="11" height="13" viewBox="0 0 11 13"><path d="M2.2 6V4Q2.2 0.8 5.5 0.8Q8.8 0.8 8.8 4V6" fill="none" stroke="#555" stroke-width="1"/><rect x="0.6" y="6" width="9.8" height="6.4" rx="1" fill="none" stroke="#555" stroke-width="1"/></svg>
<svg style="left:1003px;top:216px" width="13" height="11" viewBox="0 0 13 11"><path d="M0.5 0.8H7M0.5 5.2H7M0.5 9.8H7 M9.5 0.8Q11 0.8 11 2.5V4Q11 5.2 12.2 5.2Q11 5.2 11 6.4V8Q11 9.8 9.5 9.8" fill="none" stroke="#555" stroke-width="1"/></svg>
<svg style="left:1003px;top:240px" width="13" height="13" viewBox="0 0 13 13"><path d="M0.5 2.5H13M0.5 6.5H13M0.5 10.5H13" stroke="#555" stroke-width="1"/><circle cx="9.5" cy="2.5" r="1.7" fill="#d9d9d9" stroke="#555" stroke-width="1"/><circle cx="3.5" cy="6.5" r="1.7" fill="#d9d9d9" stroke="#555" stroke-width="1"/><circle cx="6.5" cy="10.5" r="1.7" fill="#d9d9d9" stroke="#555" stroke-width="1"/></svg>
<svg style="left:1003px;top:267px" width="14" height="14" viewBox="0 0 14 14"><path d="M2.5 4Q4.5 0.8 7.5 0.8Q13 0.8 13 7Q13 13 7.5 13Q2.5 13 1.5 8.5" fill="none" stroke="#555" stroke-width="1"/><path d="M0.5 2V6H4.5" fill="none" stroke="#555" stroke-width="1"/><path d="M7.5 3.5V7.2L10 9" fill="none" stroke="#555" stroke-width="1"/></svg>
<svg style="left:1003px;top:295px" width="13" height="14" viewBox="0 0 13 14"><rect x="0.6" y="0.6" width="11.8" height="12.8" rx="1.2" fill="none" stroke="#555" stroke-width="1"/><path d="M3 2.5H10 M3.5 11V6L5 4.5H8L9.5 6V11Z" fill="none" stroke="#555" stroke-width="0.9"/><circle cx="6.5" cy="8.5" r="1.5" fill="none" stroke="#555" stroke-width="0.9"/></svg>
<div class="a" style="left:1000px;top:320px;width:21px;height:1px;background:#d4d4d4"></div>
<div class="a" style="left:1004px;top:337px;width:2px;height:2px;background:#999"></div>
<div class="a" style="left:1008px;top:337px;width:2px;height:2px;background:#999"></div>
<div class="a" style="left:1012px;top:337px;width:2px;height:2px;background:#999"></div>

<!-- STATUS BAR -->
<div class="a" style="left:0;top:523px;width:1024px;height:22px;background:#e9e9e9;border-top:1px solid #d9d9d9"></div>
<div class="a" style="left:0;top:544px;width:1024px;height:1px;background:#f7f7f7"></div>
<div class="t st" style="left:7px;top:531px">Page Num: 4</div>
<div class="a sts" style="left:58px"></div>
<div class="t st" style="left:66px;top:531px">Page: 4/5</div>
<div class="a sts" style="left:105px"></div>
<div class="t st" style="left:112px;top:531px">Section: 2/3</div>
<div class="t st" style="left:168px;top:531px">SetValue: 3.1cm</div>
<div class="a sts" style="left:232px"></div>
<div class="t st" style="left:240px;top:531px">Row: 2</div>
<div class="t st" style="left:274px;top:531px">Column: 44</div>
<div class="a sts" style="left:326px"></div>
<div class="t st" style="left:333px;top:531px">Words: 66</div>
<div class="a sts" style="left:376px"></div>
<svg style="left:384px;top:529px" width="12" height="10" viewBox="0 0 12 10"><path d="M4 9.4H0.6V0.6H11.4V9.4H8 M3.5 4.5L5.5 6.5L9 2.5" fill="none" stroke="#666" stroke-width="1"/></svg>
<div class="t st" style="left:398px;top:529.5px">Spell Check</div>
<div class="a" style="left:450px;top:531.5px;width:0;height:0;border-top:3px solid transparent;border-bottom:3px solid transparent;border-left:3px solid #777"></div>
<div class="a sts" style="left:458px"></div>
<!-- right status -->
<svg style="left:696px;top:529px" width="11" height="11" viewBox="0 0 11 11"><path d="M0.5 3.5V0.5H3.5M7.5 0.5H10.5V3.5M10.5 7.5V10.5H7.5M3.5 10.5H0.5V7.5M1 1L3.5 3.5M10 1L7.5 3.5M10 10L7.5 7.5M1 10L3.5 7.5" fill="none" stroke="#666" stroke-width="1"/></svg>
<svg style="left:715px;top:529px" width="12" height="11" viewBox="0 0 12 11"><path d="M0.5 0.8H5Q6 0.8 6 2V10.5Q6 9.5 5 9.5H0.5Z M11.5 0.8H7Q6 0.8 6 2V10.5Q6 9.5 7 9.5H11.5Z" fill="none" stroke="#666" stroke-width="1"/></svg>
<div class="a" style="left:732px;top:526px;width:17px;height:17px;background:#d0d0d0;border-radius:3px"></div>
<svg style="left:735px;top:529px" width="11" height="11" viewBox="0 0 11 11"><rect x="0.6" y="0.6" width="9.8" height="9.8" rx="1.5" fill="none" stroke="#555" stroke-width="1"/><path d="M2.5 3.5H8.5M2.5 5.5H8.5M2.5 7.5H8.5" stroke="#555" stroke-width="0.9"/></svg>
<svg style="left:754px;top:529px" width="12" height="11" viewBox="0 0 12 11"><rect x="0.6" y="0.6" width="10.8" height="9.8" rx="1.5" fill="none" stroke="#666" stroke-width="1"/><path d="M2.5 3H4M5.5 3H9.5M2.5 5.5H4M5.5 5.5H9.5M2.5 8H4M5.5 8H9.5" stroke="#666" stroke-width="0.9"/></svg>
<svg style="left:773px;top:528px" width="12" height="12" viewBox="0 0 12 12"><circle cx="6" cy="6" r="5.3" fill="none" stroke="#666" stroke-width="1"/><ellipse cx="6" cy="6" rx="2.3" ry="5.3" fill="none" stroke="#666" stroke-width="0.9"/><path d="M0.7 4.2H11.3M0.7 7.8H11.3" stroke="#666" stroke-width="0.9"/></svg>
<svg style="left:792px;top:528px" width="13" height="12" viewBox="0 0 13 12"><path d="M0.7 7Q6.5 1 12.3 7Q6.5 13 0.7 7Z" fill="none" stroke="#666" stroke-width="1"/><circle cx="6.5" cy="7" r="2.2" fill="none" stroke="#666" stroke-width="1"/><path d="M3 3L2 1.5M6.5 2.5V0.5M10 3L11 1.5" stroke="#666" stroke-width="0.9"/></svg>
<div class="a sts" style="left:814px"></div>
<div class="t st" style="left:823px;top:531px;color:#454545">83%</div>
<div class="a" style="left:843px;top:534px;width:0;height:0;border-left:2px solid transparent;border-right:2px solid transparent;border-top:2.5px solid #999"></div>
<div class="a" style="left:855px;top:534px;width:9px;height:1.2px;background:#555"></div>
<div class="a" style="left:872px;top:534px;width:104px;height:1px;background:#c2c2c2"></div><div class="a" style="left:872px;top:534px;width:38px;height:1px;background:#8a8a8a"></div>
<div class="a" style="left:925px;top:531px;width:1px;height:5px;background:#b5b5b5"></div>
<div class="a" style="left:908px;top:529px;width:11px;height:11px;border-radius:50%;background:#fff;border:1.3px solid #555"></div>
<svg style="left:983px;top:529px" width="10" height="10" viewBox="0 0 10 10"><path d="M5 0V10M0 5H10" stroke="#555" stroke-width="1.2"/></svg>
<svg style="left:1002px;top:529px" width="11" height="11" viewBox="0 0 11 11"><path d="M0.5 3V0.5H3M8 0.5H10.5V3M10.5 8V10.5H8M3 10.5H0.5V8" fill="none" stroke="#666" stroke-width="1"/><circle cx="5.5" cy="5.5" r="1" fill="#666"/></svg>


<!-- TASKBAR -->
<div class="a" style="left:0;top:545px;width:1024px;height:30px;background:#0b0b0b"></div>
<div class="a" style="left:331px;top:545px;width:36px;height:30px;background:#373737"></div>
<div class="a" style="left:150px;top:573px;width:30px;height:2px;background:#8c9fbd"></div>
<div class="a" style="left:223px;top:573px;width:30px;height:2px;background:#8c9fbd"></div>
<div class="a" style="left:260px;top:573px;width:30px;height:2px;background:#8c9fbd"></div>
<div class="a" style="left:297px;top:573px;width:30px;height:2px;background:#8c9fbd"></div>
<div class="a" style="left:331px;top:573px;width:36px;height:2px;background:#8c9fbd"></div>
<!-- windows -->
<svg style="left:12px;top:554px" width="13" height="12" viewBox="0 0 13 12"><path d="M0 1.6L5.4 0.8V5.5H0Z M6.2 0.7L13 0V5.5H6.2Z M0 6.3H5.4V11.2L0 10.4Z M6.2 6.3H13V12L6.2 11.3Z" fill="#fff"/></svg>
<!-- search -->
<svg style="left:47px;top:554px" width="14" height="13" viewBox="0 0 14 13"><circle cx="8.8" cy="5" r="4.2" fill="none" stroke="#e6e6e6" stroke-width="1.2"/><path d="M5.8 8L1 12.5" stroke="#e6e6e6" stroke-width="1.3"/></svg>
<!-- task view -->
<svg style="left:84px;top:554px" width="13" height="13" viewBox="0 0 13 13"><path d="M0 0.6H9M0 12.4H9 M1.5 3H8V10H1.5Z M10.5 3V10M12.3 3V10" fill="none" stroke="#e6e6e6" stroke-width="1"/><path d="M10.5 0.5H12.5" stroke="#e6e6e6" stroke-width="1"/></svg>
<!-- edge -->
<svg style="left:121px;top:552px" width="16" height="16" viewBox="0 0 16 16"><path d="M4 7.6H13.6Q13.8 3 8.8 3Q4 3 3.6 8.5Q3.6 13.8 9 13.8Q11.8 13.8 13.4 12.6" fill="none" stroke="#1e7fe0" stroke-width="3.2"/><path d="M0.5 7.5Q1.5 1 8.5 0.8Q4.5 2.5 3.5 6Z" fill="#1e7fe0"/></svg>
<!-- folder -->
<svg style="left:157px;top:553px" width="17" height="15" viewBox="0 0 17 15"><path d="M0.5 1.5Q0.5 0.5 1.5 0.5H6L7.2 1.8H15.5Q16.5 1.8 16.5 2.8V3.5H0.5Z" fill="#e9b949"/><path d="M0.5 3H16.5V13Q16.5 13.5 16 13.5H1Q0.5 13.5 0.5 13Z" fill="#fbe29a"/><path d="M3.5 14.5V9.5Q3.5 8.6 4.4 8.6H12.6Q13.5 8.6 13.5 9.5V14.5H11V11.2H6V14.5Z" fill="#1d8de6"/></svg>
<!-- store -->
<svg style="left:192px;top:551px" width="18" height="18" viewBox="0 0 18 18"><path d="M6 4.5V3Q6 0.8 9 0.8Q12 0.8 12 3V4.5" fill="none" stroke="#eee" stroke-width="1.2"/><rect x="0.5" y="4.5" width="17" height="13" rx="1" fill="#f4f4f4"/><rect x="5" y="7.5" width="3.6" height="3.6" fill="#f25022"/><rect x="9.4" y="7.5" width="3.6" height="3.6" fill="#7fba00"/><rect x="5" y="11.9" width="3.6" height="3.6" fill="#00a4ef"/><rect x="9.4" y="11.9" width="3.6" height="3.6" fill="#ffb900"/></svg>
<!-- chrome -->
<svg style="left:230px;top:551px" width="18" height="18" viewBox="0 0 18 18"><circle cx="9" cy="9" r="8.8" fill="#dd4b3e"/><path d="M9 9L1.4 4.6A8.8 8.8 0 0 0 7.6 17.7Z" fill="#1da462"/><path d="M9 9L16.6 4.6A8.8 8.8 0 0 1 7.6 17.7Z" fill="#ffcd40"/><circle cx="9" cy="9" r="4" fill="#fff"/><circle cx="9" cy="9" r="3.2" fill="#4c8bf5"/></svg>
<!-- wps -->
<svg style="left:266px;top:551px" width="17" height="18" viewBox="0 0 17 18"><path d="M8.5 0L16.5 4.5V13.5L8.5 18L0.5 13.5V4.5Z" fill="#2f6fe6"/><path d="M3.5 6.5L6 12L8.5 8L11 12L13.5 6.5 M3.5 6.5Q8.5 5 13.5 6.5" fill="none" stroke="#fff" stroke-width="1.2"/></svg>
<!-- paint -->
<svg style="left:301px;top:550px" width="21" height="20" viewBox="0 0 21 20"><ellipse cx="10" cy="10.5" rx="8.3" ry="6" transform="rotate(-28 10 10.5)" fill="#d2e1f2"/><path d="M3 13.5Q4.5 12.5 5.5 14.5" stroke="#0b0b0b" stroke-width="1.2" fill="none"/><circle cx="5.2" cy="10.8" r="1.4" fill="#e53b2f"/><circle cx="7.5" cy="7.3" r="1.4" fill="#47b34a"/><circle cx="11" cy="6" r="1.4" fill="#f2b71f"/><circle cx="9" cy="12" r="1.1" fill="#0b0b0b"/><path d="M9.5 18.5L17.2 4" stroke="#e39a3a" stroke-width="1.7"/><path d="M15.8 3.8L17.5 0.8L19.8 2.2L18.3 5.3Z" fill="#c89a6a"/></svg>
<!-- eq editor taskbar icon -->
<svg style="left:340px;top:552px" width="17" height="17" viewBox="0 0 17 17"><rect x="0.5" y="4" width="8.5" height="9" fill="#e8232b" stroke="#ddd" stroke-width="0.8"/><path d="M2.5 5.5H7M2.5 5.5L4.8 8.5L2.5 11.5H7" fill="none" stroke="#fff" stroke-width="1.1"/><rect x="10.5" y="0.5" width="6" height="7" fill="#fff"/><rect x="10.5" y="9.5" width="6" height="7" fill="#fff"/><path d="M12 2H15M12 3.5H15M13.5 2V6" stroke="#e8232b" stroke-width="0.9"/><path d="M12 11H15M12 12.5H14 M12 11V15" stroke="#e8232b" stroke-width="0.9"/></svg>
<!-- battery -->
<div class="a" style="left:742px;top:552.5px;width:37px;height:15px;border:1.5px solid #fff;background:#000"></div>
<div class="a" style="left:744px;top:554.5px;width:20px;height:11px;background:#1ea04d"></div>
<div class="a" style="left:779px;top:557px;width:2px;height:6px;background:#fff"></div>
<div class="t" style="left:750px;top:554.8px;font-size:10.6px;color:#e0ecf8">58%</div>
<div class="a" style="left:781px;top:552px;width:13px;height:15px;background:#0d1a2e"></div>
<svg style="left:784px;top:553px" width="8" height="13" viewBox="0 0 8 13"><path d="M2 0V3M6 0V3" stroke="#fff" stroke-width="1.1"/><path d="M0.5 3H7.5V6Q7.5 9 4 9Q0.5 9 0.5 6Z" fill="#fff"/><path d="M4 9V13" stroke="#fff" stroke-width="1.2"/></svg>
<!-- person -->
<svg style="left:809px;top:554px" width="12" height="12" viewBox="0 0 12 12"><circle cx="8.5" cy="2.5" r="2" fill="none" stroke="#e6e6e6" stroke-width="1"/><path d="M5.8 6.5Q8.5 3.5 11.5 6.5" fill="none" stroke="#e6e6e6" stroke-width="1"/><circle cx="4" cy="6" r="2" fill="none" stroke="#e6e6e6" stroke-width="1"/><path d="M0.5 11.5Q1.5 8.2 4 8.2Q6.5 8.2 7.5 11.5" fill="none" stroke="#e6e6e6" stroke-width="1"/></svg>
<svg style="left:837px;top:557px" width="10" height="6" viewBox="0 0 10 6"><path d="M0.5 5.5L5 1L9.5 5.5" fill="none" stroke="#e6e6e6" stroke-width="1.1"/></svg>
<svg style="left:853px;top:555px" width="13" height="10" viewBox="0 0 13 10"><path d="M4 2H11.5V8.5H4 M11.5 4H12.5V6.5H11.5" fill="none" stroke="#e6e6e6" stroke-width="1"/><path d="M1.5 0V2.5M3.5 0V2.5 M0.5 2.5H4.5V5Q4.5 6.5 2.5 6.5Q0.5 6.5 0.5 5Z M2.5 6.5V10" fill="none" stroke="#e6e6e6" stroke-width="1"/><rect x="5.5" y="3.5" width="3" height="3.5" fill="#e6e6e6"/></svg>
<svg style="left:872px;top:553px" width="12" height="13" viewBox="0 0 12 13"><path d="M1 1.5H3M2 0.5V2.5" stroke="#fff" stroke-width="0.9"/><path d="M1.5 12Q1.5 4.5 11 4.5 M3.5 12Q3.5 6.8 11 6.8 M5.5 12Q5.5 9 11 9" fill="none" stroke="#888" stroke-width="1"/><circle cx="10" cy="11.5" r="0.9" fill="#aaa"/></svg>
<svg style="left:889px;top:555px" width="13" height="11" viewBox="0 0 13 11"><path d="M0.5 3.5H3L6.5 0.5V10.5L3 7.5H0.5Z" fill="none" stroke="#e6e6e6" stroke-width="1"/><path d="M8.5 3.5Q9.5 5.5 8.5 7.5 M10.5 1.8Q12.5 5.5 10.5 9.2" fill="none" stroke="#e6e6e6" stroke-width="1"/></svg>
<div class="t" style="left:909.5px;top:555.5px;font-size:9.2px;color:#f0f0f0;letter-spacing:-0.5px">ENG</div>
<div class="t" style="left:947px;top:549.5px;font-size:9.2px;color:#f0f0f0;letter-spacing:-0.35px">22:45</div>
<div class="t" style="left:936px;top:562.5px;font-size:9.2px;color:#f0f0f0;letter-spacing:-0.3px">08/09/2019</div>
<svg style="left:992px;top:553px" width="21" height="20" viewBox="0 0 21 20"><path d="M1 1H13V11H5.5L3.5 13V11H1Z" fill="#f4f4f4"/><path d="M3 3.5H11M3 5.5H11M3 7.5H8" stroke="#1a1a1a" stroke-width="1"/><circle cx="13" cy="12.5" r="6.6" fill="#0b0b0b"/><circle cx="13" cy="12.5" r="5.6" fill="#2b2b2b" stroke="#707070" stroke-width="0.9"/><path d="M11.5 9.6L13.2 8.3V16.2" fill="none" stroke="#f4f4f4" stroke-width="1.3"/></svg>
<div class="a" style="left:1020px;top:545px;width:1px;height:30px;background:#555"></div>

</body></html>
